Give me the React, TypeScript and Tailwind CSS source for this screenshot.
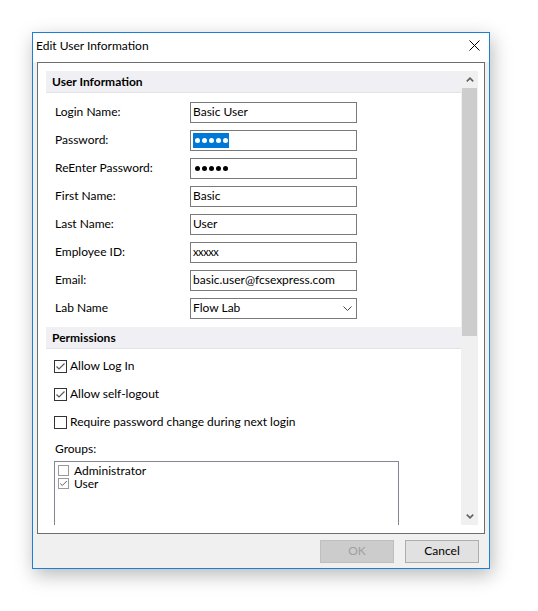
import React from "react";

const fields = [
  { label: "Login Name:", value: "Basic User" },
  { label: "Password:", value: "", kind: "selected" },
  { label: "ReEnter Password:", value: "", kind: "dots" },
  { label: "First Name:", value: "Basic" },
  { label: "Last Name:", value: "User" },
  { label: "Employee ID:", value: "xxxxx", kind: "small" },
  { label: "Email:", value: "basic.user@fcsexpress.com" },
];

const SectionHeader = ({ children }: { children: React.ReactNode }) => (
  <div className="h-[22px] bg-[#f0f0f4] border-b border-[#e2e2e7] pl-[6px] flex items-center font-bold text-[12px] text-black">
    {children}
  </div>
);

const Check = ({ checked, light }: { checked?: boolean; light?: boolean }) => (
  <span
    className={
      light
        ? "w-[11px] h-[11px] border border-[#9a9a9a] bg-white flex items-center justify-center shrink-0"
        : "w-[13px] h-[13px] border border-[#333333] bg-white flex items-center justify-center shrink-0"
    }
  >
    {checked && (
      <svg width={light ? 9 : 11} height={light ? 9 : 11} viewBox="0 0 11 11">
        <path d="M1.5 5.5 L4 8 L9.5 2.5" fill="none" stroke="#5a5a5a" strokeWidth="1.2" />
      </svg>
    )}
  </span>
);

const CheckRow = ({ checked, children }: { checked?: boolean; children: React.ReactNode }) => (
  <div className="h-[28px] flex items-center gap-[3px] pl-[8px]">
    <Check checked={checked} />
    <span className="text-[12px]">{children}</span>
  </div>
);

const Field = ({ label, value, kind }: { label: string; value: string; kind?: string }) => (
  <div className="h-[28px] flex items-center pl-[9px]">
    <span className="w-[135px] text-[12px]">{label}</span>
    <div className="w-[167px] h-[21px] border border-[#7a7a7a] bg-white flex items-center pl-[2px] text-[12px]">
      {kind === "selected" && (
        <span className="bg-[#0078d7] text-white h-[15px] w-[36px] flex items-center justify-center gap-[2px]">
          {[0, 1, 2, 3, 4].map((i) => (
            <span key={i} className="w-[5px] h-[5px] rounded-full bg-white" />
          ))}
        </span>
      )}
      {kind === "dots" && (
        <span className="h-[15px] w-[36px] flex items-center justify-center gap-[2px]">
          {[0, 1, 2, 3, 4].map((i) => (
            <span key={i} className="w-[5px] h-[5px] rounded-full bg-black" />
          ))}
        </span>
      )}
      {kind === "small" && <span className="text-[11px] tracking-[-0.4px]">{value}</span>}
      {!kind && <span>{value}</span>}
    </div>
  </div>
);

export default function App() {
  return (
    <div className="w-[538px] h-[611px] bg-white pt-[32px] pl-[32px] font-['Lato',sans-serif] text-black">
      <div className="w-[458px] h-[537px] border border-[#1a7fd6] bg-[#f0f0f0] flex flex-col shadow-[2px_6px_18px_rgba(0,0,0,0.28)]">
        {/* title bar */}
        <div className="h-[29px] bg-white flex items-center justify-between pl-[3px] pr-[9px] pb-[4px]">
          <span className="text-[12px]">Edit User Information</span>
          <svg width="11" height="11" viewBox="0 0 11 11">
            <path d="M0.5 0.5 L10.5 10.5 M10.5 0.5 L0.5 10.5" stroke="#000" strokeWidth="1" />
          </svg>
        </div>

        {/* scrolling panel */}
        <div className="mx-[4px] h-[472px] border border-[#6d6d6d] bg-white pt-[8px] pb-[8px] pl-[8px] pr-[6px] flex">
          <div className="flex-1 h-[454px] overflow-hidden">
            <SectionHeader>User Information</SectionHeader>
            <div className="pt-[5px] pb-[5px]">
              {fields.map((f) => (
                <Field key={f.label} {...f} />
              ))}
              <div className="h-[28px] flex items-center pl-[9px]">
                <span className="w-[135px] text-[12px]">Lab Name</span>
                <div className="w-[167px] h-[21px] border border-[#7a7a7a] bg-white flex items-center justify-between pl-[2px] pr-[4px] text-[12px]">
                  <span>Flow Lab</span>
                  <svg width="9" height="5" viewBox="0 0 9 5">
                    <path d="M0.5 0.5 L4.5 4.5 L8.5 0.5" fill="none" stroke="#444" strokeWidth="1" />
                  </svg>
                </div>
              </div>
            </div>
            <SectionHeader>Permissions</SectionHeader>
            <div className="pt-[3px]">
              <CheckRow checked>Allow Log In</CheckRow>
              <CheckRow checked>Allow self-logout</CheckRow>
              <CheckRow>Require password change during next login</CheckRow>
              <div className="h-[25px] flex items-center pl-[9px] text-[12px]">Groups:</div>
              <div className="ml-[8px] w-[345px] h-[80px] border border-[#828790] border-b-0 pt-[2px] pl-[3px]">
                <div className="h-[13px] flex items-center gap-[5px] text-[12px] leading-[12px]">
                  <Check light />
                  <span>Administrator</span>
                </div>
                <div className="h-[13px] flex items-center gap-[5px] text-[12px] leading-[12px]">
                  <Check light checked />
                  <span>User</span>
                </div>
              </div>
            </div>
          </div>

          {/* vertical scrollbar */}
          <div className="w-[17px] h-[454px] bg-[#f0f0f0] flex flex-col">
            <div className="h-[17px] flex items-center justify-center">
              <svg width="8" height="5" viewBox="0 0 8 5">
                <path d="M0.8 4.4 L4 1.2 L7.2 4.4" fill="none" stroke="#606060" strokeWidth="1.6" />
              </svg>
            </div>
            <div className="mx-auto w-[15px] h-[248px] bg-[#cdcdcd]" />
            <div className="flex-1" />
            <div className="h-[17px] flex items-center justify-center">
              <svg width="8" height="5" viewBox="0 0 8 5">
                <path d="M0.8 0.6 L4 3.8 L7.2 0.6" fill="none" stroke="#606060" strokeWidth="1.6" />
              </svg>
            </div>
          </div>
        </div>

        {/* button bar */}
        <div className="flex-1 flex items-center justify-end gap-[11px] pr-[10px]">
          <div className="w-[74px] h-[23px] bg-[#cccccc] border border-[#bfbfbf] flex items-center justify-center text-[12px] text-[#a0a0a0]">
            OK
          </div>
          <div className="w-[74px] h-[23px] bg-[#e1e1e1] border border-[#adadad] flex items-center justify-center text-[12px]">
            Cancel
          </div>
        </div>
      </div>
    </div>
  );
}
